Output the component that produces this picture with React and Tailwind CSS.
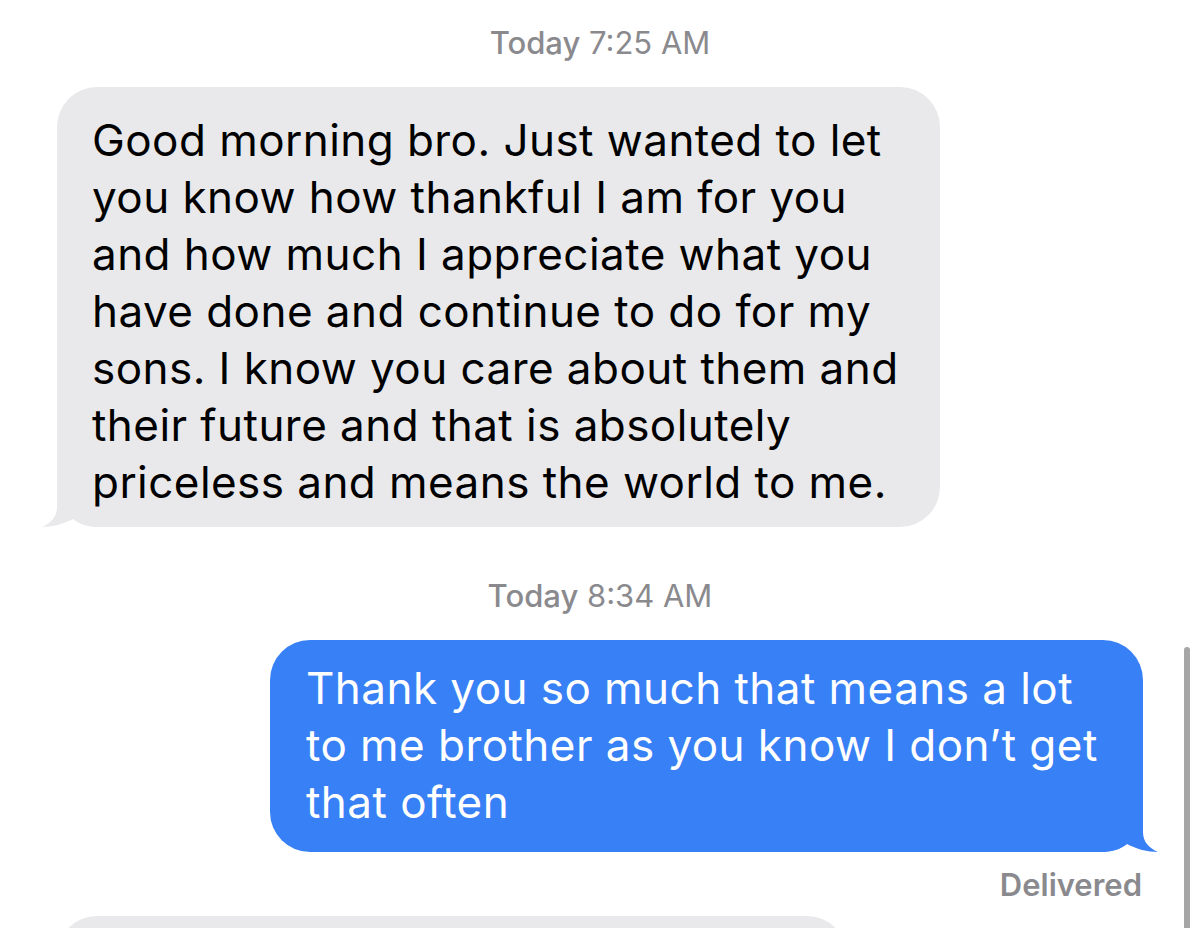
import React from 'react';

// iMessage thread screenshot

const grayLines = [
    'Good morning bro. Just wanted to let',
    'you know how thankful I am for you',
    'and how much I appreciate what you',
    'have done and continue to do for my',
    'sons. I know you care about them and',
    'their future and that is absolutely',
    'priceless and means the world to me.',
];

const blueLines = [
    'Thank you so much that means a lot',
    'to me brother as you know I don\u2019t get',
    'that often',
];

const Tail = ({ color, flip }) => (
    <svg
        width="58"
        height="40"
        viewBox="0 0 58 40"
        className={flip ? 'absolute -right-[15px] bottom-0 -scale-x-100' : 'absolute -left-[15px] bottom-0'}
    >
        <path
            d="M15 0 L15 20 C15 30 9 36 0 40 C10 40 22 37 31 32 C38 38 48 40 58 40 L58 0 Z"
            fill={color}
        />
    </svg>
);

const Timestamp = ({ time }) => (
    <div className="self-center text-[31px] leading-[38px] text-[#8a8a8e]">
        <span className="font-medium">Today</span> {time}
    </div>
);

const Bubble = ({ lines, outgoing }) => (
    <div
        className={
            outgoing
                ? 'relative self-end w-[873px] rounded-[40px] bg-[#3880f5] pl-[36px] pt-[20px] pb-[21px] text-white'
                : 'relative self-start w-[883px] rounded-[40px] bg-[#e9e9eb] pl-[35px] pt-[25px] pb-[16px] text-black'
        }
    >
        <Tail color={outgoing ? '#3880f5' : '#e9e9eb'} flip={outgoing} />
        <div className="relative flex flex-col text-[44px] leading-[57px] tracking-[0.45px]">
            {lines.map((line) => (
                <span key={line} className="whitespace-nowrap">{line}</span>
            ))}
        </div>
    </div>
);

const App = () => {
    return (
        <div
            className="relative w-[1200px] h-[928px] overflow-hidden bg-white"
            style={{ fontFamily: 'Inter, "Noto Sans", sans-serif' }}
        >
            <div className="flex flex-col px-[57px] pt-[24px]">
                <Timestamp time="7:25 AM" />

                <div className="pt-[25px]">
                    <Bubble lines={grayLines} />
                </div>

                <div className="flex flex-col pt-[50px] gap-[25px]">
                    <Timestamp time="8:34 AM" />
                    <Bubble lines={blueLines} outgoing />
                </div>

                <div className="flex flex-col pt-[14px] gap-[12px]">
                    <span className="self-end pr-px text-[31px] leading-[38px] font-semibold text-[#8a8a8e]">
                        Delivered
                    </span>
                    {/* next incoming message, cut off at the bottom */}
                    <div className="h-[200px] w-[790px] rounded-[40px] bg-[#e9e9eb]" />
                </div>
            </div>

            {/* scroll indicator */}
            <div className="absolute right-[10px] top-[647px] h-[300px] w-[6px] rounded-full bg-[#a6a6a6]" />
        </div>
    );
};

export default App;
